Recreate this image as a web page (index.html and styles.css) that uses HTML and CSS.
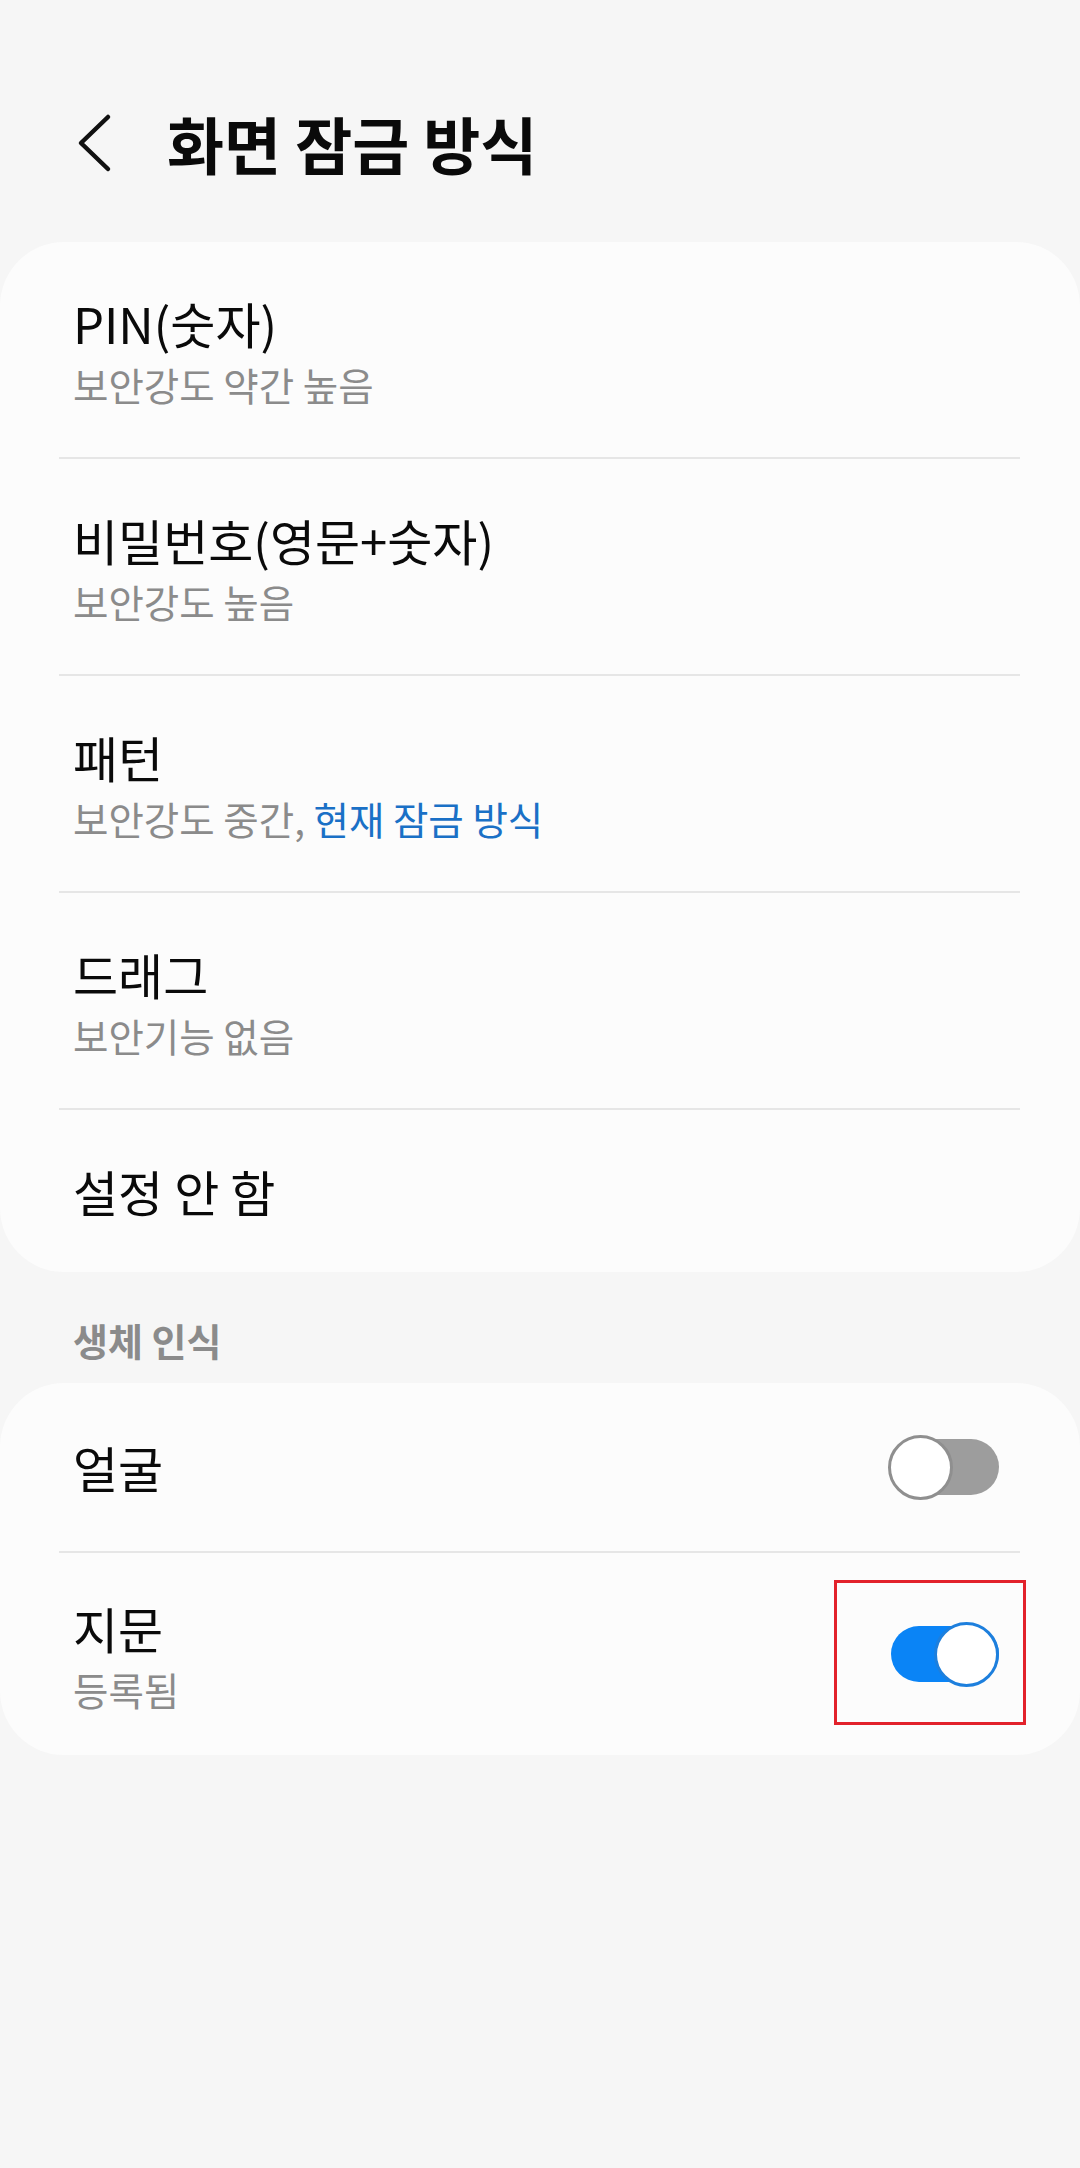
FILE: index.html
```html
<!DOCTYPE html>
<html>
<head>
    <title>화면 잠금 방식</title>
    <link rel="stylesheet" href="styles.css">
</head>
<body>
    <div class="app-header">
        <svg class="back-icon" width="36" height="60" viewBox="0 0 36 60">
            <polyline points="31,4 4,30 31,56" fill="none" stroke="#111" stroke-width="4.5" stroke-linecap="round" stroke-linejoin="round"/>
        </svg>
        <h1 class="page-title">화면 잠금 방식</h1>
    </div>

    <div class="settings-card">
        <div class="setting-row two-line">
            <div class="row-title">PIN(숫자)</div>
            <div class="row-summary">보안강도 약간 높음</div>
        </div>
        <div class="row-divider"></div>
        <div class="setting-row two-line">
            <div class="row-title">비밀번호(영문+숫자)</div>
            <div class="row-summary">보안강도 높음</div>
        </div>
        <div class="row-divider"></div>
        <div class="setting-row two-line">
            <div class="row-title">패턴</div>
            <div class="row-summary">보안강도 중간, <span class="current-mark">현재 잠금 방식</span></div>
        </div>
        <div class="row-divider"></div>
        <div class="setting-row two-line">
            <div class="row-title">드래그</div>
            <div class="row-summary">보안기능 없음</div>
        </div>
        <div class="row-divider"></div>
        <div class="setting-row one-line">
            <div class="row-title">설정 안 함</div>
        </div>
    </div>

    <div class="section-label">생체 인식</div>

    <div class="settings-card">
        <div class="setting-row switch-row face-row">
            <div class="row-text">
                <div class="row-title">얼굴</div>
            </div>
            <div class="switch"></div>
        </div>
        <div class="row-divider"></div>
        <div class="setting-row switch-row finger-row">
            <div class="row-text">
                <div class="row-title">지문</div>
                <div class="row-summary">등록됨</div>
            </div>
            <div class="switch-wrap">
                <div class="switch switch-on"></div>
                <div class="highlight-box"></div>
            </div>
        </div>
    </div>
</body>
</html>
```

FILE: styles.css
```css
body {
    margin: 0;
    padding: 0;
    background-color: #f6f6f6;
    font-family: "Noto Sans CJK KR", "Noto Sans", sans-serif;
    color: #0a0a0a;
}

.app-header {
    height: 242px;
    box-sizing: border-box;
    padding: 44px 0 0 77px;
    display: flex;
    align-items: center;
}

.back-icon {
    display: block;
    flex-shrink: 0;
}

.page-title {
    margin: 0 0 0 54px;
    font-size: 62px;
    font-weight: 700;
    line-height: 72px;
}

.settings-card {
    background-color: #fcfcfc;
    border-radius: 64px;
}

.setting-row {
    padding: 0 81px 0 73px;
}

.two-line {
    padding-top: 50px;
    padding-bottom: 43px;
}

.one-line {
    height: 162px;
    display: flex;
    align-items: center;
}

.row-title {
    font-size: 49px;
    line-height: 62px;
}

.row-summary {
    font-size: 38.5px;
    line-height: 60px;
    color: #8b8b8b;
}

.current-mark {
    color: #1a70c6;
}

.row-divider {
    height: 2px;
    margin: 0 60px 0 59px;
    background-color: #e6e6e6;
}

.section-label {
    padding: 40px 0 15px 73px;
    font-size: 38px;
    line-height: 56px;
    font-weight: 600;
    color: #8b8b8b;
}

.switch-row {
    display: flex;
    align-items: center;
    justify-content: space-between;
}

.face-row {
    height: 168px;
}

.finger-row {
    padding-top: 44px;
    padding-bottom: 36px;
}

.switch-wrap {
    position: relative;
    margin-bottom: 8px;
}

.switch {
    position: relative;
    width: 111px;
    height: 65px;
}

.switch::before {
    content: "";
    position: absolute;
    left: 3px;
    right: 0;
    top: 4px;
    height: 56px;
    border-radius: 28px;
    background-color: #9d9d9d;
}

.switch::after {
    content: "";
    position: absolute;
    left: 0;
    top: 0;
    width: 65px;
    height: 65px;
    box-sizing: border-box;
    border-radius: 50%;
    border: 3px solid #8f8f8f;
    background-color: #fff;
}

.switch-on::before {
    background-color: #0a84f6;
}

.switch-on::after {
    left: auto;
    right: 0;
    border-color: #1d7fdd;
}

.highlight-box {
    position: absolute;
    left: -54px;
    top: -42px;
    width: 192px;
    height: 145px;
    box-sizing: border-box;
    border: 3px solid #e2222b;
}
```
